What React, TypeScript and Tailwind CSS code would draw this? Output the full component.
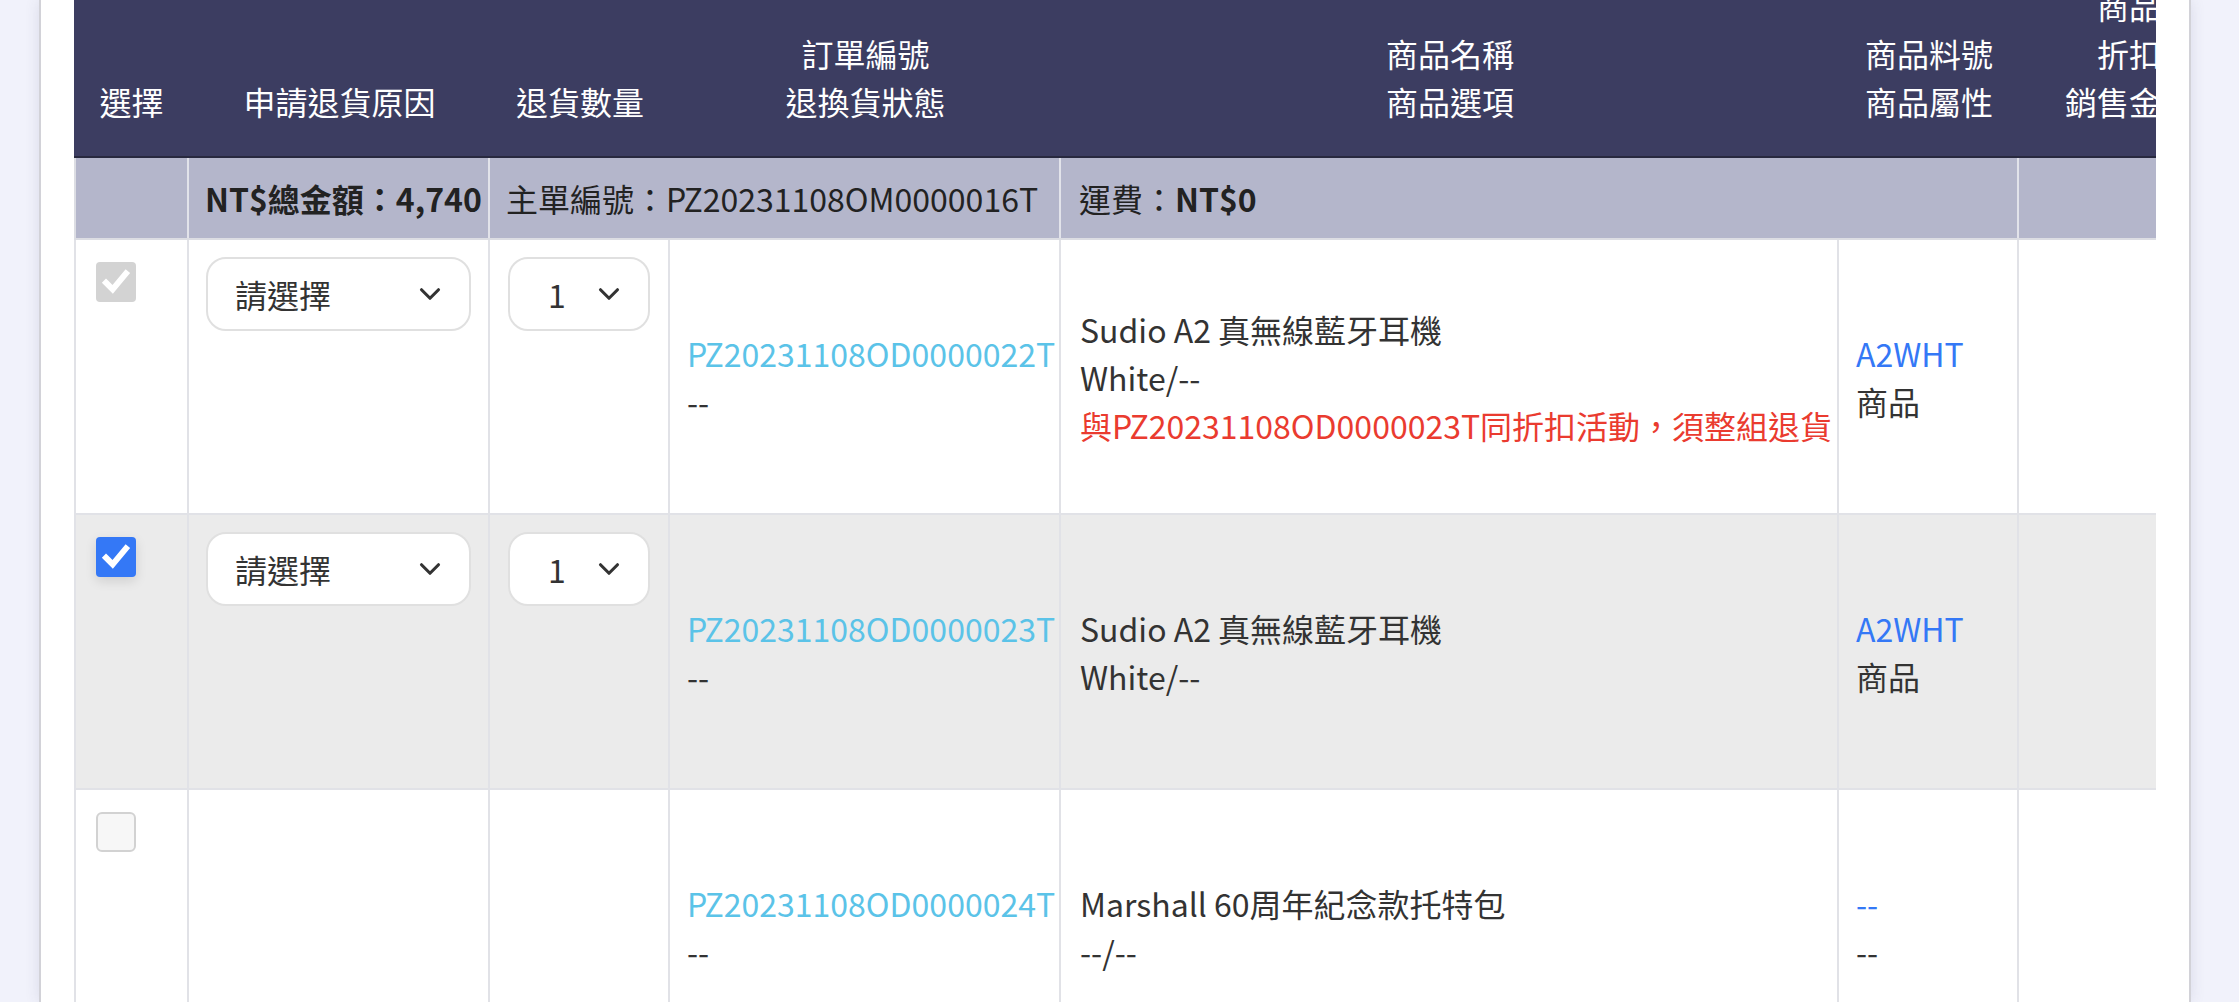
import { ChevronDown } from 'lucide-react';

type Row = {
  check: 'disabled' | 'checked' | 'empty';
  selects: boolean;
  order: string;
  status: string;
  name: string;
  option: string;
  warn?: string;
  part: string;
  attr: string;
  bg: string;
};

const rows: Row[] = [
  {
    check: 'disabled',
    selects: true,
    order: 'PZ20231108OD0000022T',
    status: '--',
    name: 'Sudio A2 真無線藍牙耳機',
    option: 'White/--',
    warn: '與PZ20231108OD0000023T同折扣活動，須整組退貨',
    part: 'A2WHT',
    attr: '商品',
    bg: 'bg-white',
  },
  {
    check: 'checked',
    selects: true,
    order: 'PZ20231108OD0000023T',
    status: '--',
    name: 'Sudio A2 真無線藍牙耳機',
    option: 'White/--',
    part: 'A2WHT',
    attr: '商品',
    bg: 'bg-[#ebebeb]',
  },
  {
    check: 'empty',
    selects: false,
    order: 'PZ20231108OD0000024T',
    status: '--',
    name: 'Marshall 60周年紀念款托特包',
    option: '--/--',
    part: '--',
    attr: '--',
    bg: 'bg-white',
  },
];

function CheckMark() {
  return (
    <svg viewBox="0 0 24 24" className="h-[32px] w-[32px]" fill="none">
      <path d="M4.5 12.5l5 5L19.5 5.5" stroke="white" strokeWidth="4.4" strokeLinecap="square" strokeLinejoin="miter" />
    </svg>
  );
}

function Checkbox({ state }: { state: Row['check'] }) {
  if (state === 'disabled') {
    return (
      <div className="flex h-[40px] w-[40px] items-center justify-center rounded-[4px] bg-[#d3d3d3]">
        <CheckMark />
      </div>
    );
  }
  if (state === 'checked') {
    return (
      <div className="flex h-[40px] w-[40px] items-center justify-center rounded-[4px] bg-[#3478f6] shadow-[0_4px_12px_rgba(0,0,0,0.12)]">
        <CheckMark />
      </div>
    );
  }
  return <div className="h-[40px] w-[40px] rounded-[6px] border-2 border-[#d2d2d2] bg-[#f7f7f7]" />;
}

function Select({ label, className }: { label: string; className: string }) {
  return (
    <div
      className={`flex h-[74px] items-center justify-between rounded-[20px] border-2 border-[#e0e0e0] bg-white text-[#333] ${className}`}
    >
      <span>{label}</span>
      <ChevronDown className="h-[34px] w-[34px] text-[#333]" strokeWidth={2.2} />
    </div>
  );
}

const cell = 'border-r-2 border-[#e1e2e7] shrink-0';

export default function App() {
  return (
    <div className="h-[1002px] overflow-hidden bg-[#f1f2fb] pl-[39px] pr-[48px] font-['Noto_Sans_CJK_TC','Noto_Sans',sans-serif] text-[32px] text-[#333]">
      <div className="h-full border-x-2 border-[#d2d2d8] bg-white px-[33px] shadow-[0_0_14px_rgba(60,60,100,0.12)]">
        <div className="h-full overflow-hidden">
          <div className="w-[2600px]">
            {/* header */}
            <div className="flex h-[158px] items-end border-b-2 border-[#28293f] bg-[#3c3d61] pb-[31px] text-center leading-[48px] text-white">
              <div className="w-[115px] shrink-0">選擇</div>
              <div className="w-[301px] shrink-0">申請退貨原因</div>
              <div className="w-[180px] shrink-0">退貨數量</div>
              <div className="w-[391px] shrink-0">
                <div>訂單編號</div>
                <div>退換貨狀態</div>
              </div>
              <div className="w-[778px] shrink-0">
                <div>商品名稱</div>
                <div>商品選項</div>
              </div>
              <div className="w-[180px] shrink-0">
                <div>商品料號</div>
                <div>商品屬性</div>
              </div>
              <div className="w-[220px] shrink-0 whitespace-nowrap">
                <div>商品</div>
                <div>折扣</div>
                <div>銷售金額</div>
              </div>
            </div>

            {/* summary */}
            <div className="flex h-[82px] items-stretch border-b-2 border-l-2 border-[#dcdde3] bg-[#b4b6cb] leading-[48px] text-[#222]">
              <div className="w-[113px] shrink-0 border-r-2 border-[#e2e3ea]" />
              <div className="flex w-[301px] shrink-0 items-center whitespace-nowrap border-r-2 border-[#e2e3ea] px-[16px] font-bold">
                NT$總金額：4,740
              </div>
              <div className="flex w-[571px] shrink-0 items-center whitespace-nowrap border-r-2 border-[#e2e3ea] px-[16px]">
                主單編號：PZ20231108OM0000016T
              </div>
              <div className="flex w-[958px] shrink-0 items-center border-r-2 border-[#e2e3ea] px-[18px]">
                運費：<span className="font-bold">NT$0</span>
              </div>
              <div className="w-[232px] shrink-0" />
            </div>

            {/* rows */}
            {rows.map((r, i) => (
              <div key={i} className={`flex h-[275px] border-b-2 border-l-2 border-[#e1e2e7] leading-[48px] ${r.bg}`}>
                <div className={`${cell} w-[113px] pl-[20px] pt-[22px]`}>
                  <Checkbox state={r.check} />
                </div>
                <div className={`${cell} w-[301px] px-[17px] pt-[17px]`}>
                  {r.selects && <Select label="請選擇" className="pl-[27px] pr-[22px]" />}
                </div>
                <div className={`${cell} w-[180px] px-[18px] pt-[17px]`}>
                  {r.selects && <Select label="1" className="pl-[38px] pr-[22px]" />}
                </div>
                <div className={`${cell} flex w-[391px] flex-col justify-center whitespace-nowrap px-[17px]`}>
                  <div className="text-[#5bc3e8]">{r.order}</div>
                  <div>{r.status}</div>
                </div>
                <div className={`${cell} flex w-[778px] flex-col justify-center whitespace-nowrap px-[19px]`}>
                  <div>{r.name}</div>
                  <div>{r.option}</div>
                  {r.warn && <div className="text-[#ea3b2f]">{r.warn}</div>}
                </div>
                <div className={`${cell} flex w-[180px] flex-col justify-center px-[17px]`}>
                  <div className="text-[#3478f6]">{r.part}</div>
                  <div>{r.attr}</div>
                </div>
                <div className={`${cell} w-[232px]`} />
              </div>
            ))}
          </div>
        </div>
      </div>
    </div>
  );
}
